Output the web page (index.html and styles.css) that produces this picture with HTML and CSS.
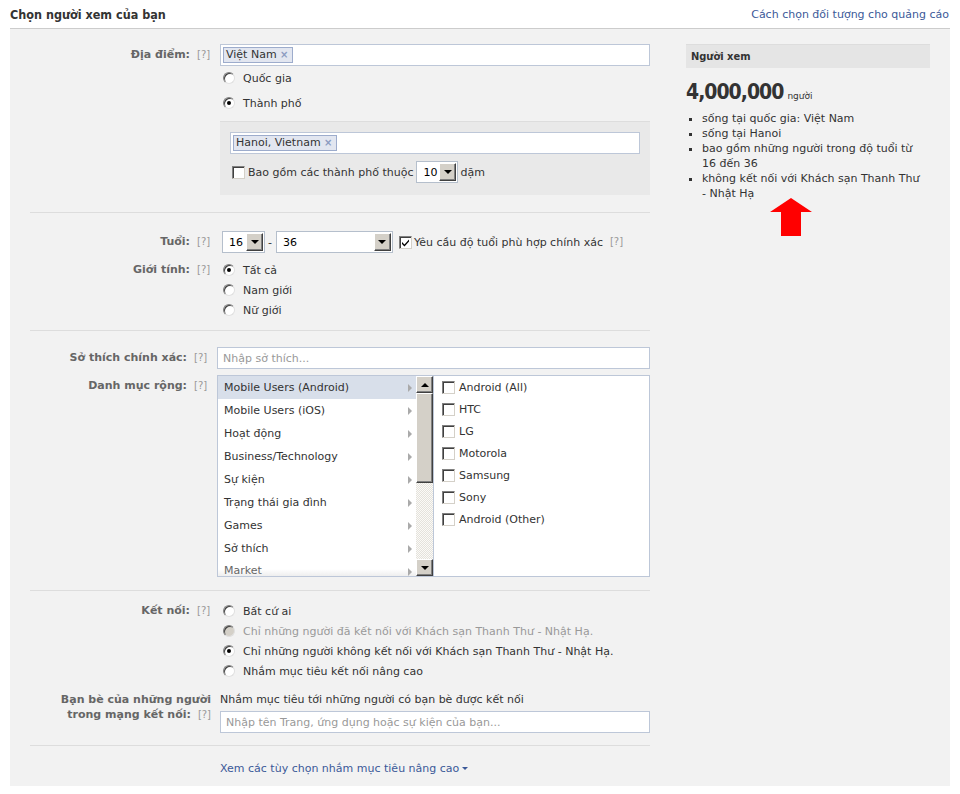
FILE: index.html
```html
<!DOCTYPE html>
<html lang="vi">
<head>
<meta charset="utf-8">
<title>Chọn người xem của bạn</title>
<link rel="stylesheet" href="styles.css">
</head>
<body>
<div class="header">
  <div class="title">Chọn người xem của bạn</div>
  <a class="link" href="#">Cách chọn đối tượng cho quảng cáo</a>
</div>
<div class="panel">
  <div class="form">
    <!-- Location -->
    <div class="section sec-loc">
      <div class="row">
        <div class="label lbl-loc">Địa điểm:</div>
        <div class="help">[?]</div>
        <div class="control">
          <div class="input"><span class="token">Việt Nam <span class="x">×</span></span></div>
          <div class="opt opt-first"><span class="radio"></span>Quốc gia</div>
          <div class="opt opt-second"><span class="radio checked"></span>Thành phố</div>
          <div class="subpanel">
            <div class="input sub-input"><span class="token">Hanoi, Vietnam <span class="x">×</span></span></div>
            <div class="sub-row"><span class="check"></span>Bao gồm các thành phố thuộc <span class="select sel-10"><span class="sel-val">10</span><span class="sel-btn"></span></span> dặm</div>
          </div>
        </div>
      </div>
    </div>
    <div class="divider d1"></div>
    <!-- Age / gender -->
    <div class="section sec-age">
      <div class="row row-age">
        <div class="label">Tuổi:</div>
        <div class="help">[?]</div>
        <div class="control age-ctrl">
          <span class="select sel-16"><span class="sel-val">16</span><span class="sel-btn"></span></span>
          <span class="dash">-</span>
          <span class="select sel-36"><span class="sel-val">36</span><span class="sel-btn"></span></span>
          <span class="check checked"><svg viewBox="0 0 11 11" width="11" height="11"><path d="M2 5 L4.5 7.5 L9 2.5 L9 4.5 L4.5 9.5 L2 7 Z" fill="#000"/></svg></span>
          <span class="age-text">Yêu cầu độ tuổi phù hợp chính xác</span>
          <span class="help inline-help">[?]</span>
        </div>
      </div>
      <div class="row row-gender">
        <div class="label">Giới tính:</div>
        <div class="help">[?]</div>
        <div class="control">
          <div class="opt"><span class="radio checked"></span>Tất cả</div>
          <div class="opt"><span class="radio"></span>Nam giới</div>
          <div class="opt"><span class="radio"></span>Nữ giới</div>
        </div>
      </div>
    </div>
    <div class="divider d2"></div>
    <!-- Interests -->
    <div class="section sec-int">
      <div class="row row-int">
        <div class="label">Sở thích chính xác:</div>
        <div class="help">[?]</div>
        <div class="control wide">
          <div class="input placeholder">Nhập sở thích...</div>
        </div>
      </div>
      <div class="row row-int row-cat">
        <div class="label">Danh mục rộng:</div>
        <div class="help">[?]</div>
        <div class="control wide">
          <div class="catbox">
            <div class="catlist">
              <div class="cat active">Mobile Users (Android)<span class="arr"></span></div>
              <div class="cat">Mobile Users (iOS)<span class="arr"></span></div>
              <div class="cat">Hoạt động<span class="arr"></span></div>
              <div class="cat">Business/Technology<span class="arr"></span></div>
              <div class="cat">Sự kiện<span class="arr"></span></div>
              <div class="cat">Trạng thái gia đình<span class="arr"></span></div>
              <div class="cat">Games<span class="arr"></span></div>
              <div class="cat">Sở thích<span class="arr"></span></div>
              <div class="cat cut">Market<span class="arr"></span></div>
            </div>
            <div class="scrollbar">
              <div class="sb-btn sb-up"><span class="tri-up"></span></div>
              <div class="sb-thumb"></div>
              <div class="sb-track"></div>
              <div class="sb-btn sb-down"><span class="tri-down"></span></div>
            </div>
            <div class="sublist">
              <div class="subitem"><span class="check"></span>Android (All)</div>
              <div class="subitem"><span class="check"></span>HTC</div>
              <div class="subitem"><span class="check"></span>LG</div>
              <div class="subitem"><span class="check"></span>Motorola</div>
              <div class="subitem"><span class="check"></span>Samsung</div>
              <div class="subitem"><span class="check"></span>Sony</div>
              <div class="subitem"><span class="check"></span>Android (Other)</div>
            </div>
          </div>
        </div>
      </div>
    </div>
    <div class="divider d3"></div>
    <!-- Connections -->
    <div class="section sec-conn">
      <div class="row">
        <div class="label">Kết nối:</div>
        <div class="help">[?]</div>
        <div class="control">
          <div class="opt"><span class="radio"></span>Bất cứ ai</div>
          <div class="opt disabled"><span class="radio dis"></span>Chỉ những người đã kết nối với Khách sạn Thanh Thư - Nhật Hạ.</div>
          <div class="opt"><span class="radio checked"></span>Chỉ những người không kết nối với Khách sạn Thanh Thư - Nhật Hạ.</div>
          <div class="opt"><span class="radio"></span>Nhắm mục tiêu kết nối nâng cao</div>
        </div>
      </div>
      <div class="row row-friends">
        <div class="label two-line">Bạn bè của những người<br>trong mạng kết nối:<span class="help inline-q">[?]</span></div>
        <div class="control">
          <div class="friends-text">Nhắm mục tiêu tới những người có bạn bè được kết nối</div>
          <div class="input placeholder">Nhập tên Trang, ứng dụng hoặc sự kiện của bạn...</div>
        </div>
      </div>
    </div>
    <div class="divider d4"></div>
    <div class="more"><a class="link" href="#">Xem các tùy chọn nhắm mục tiêu nâng cao</a><span class="caret"></span></div>
  </div>
  <div class="side">
    <div class="side-head">Người xem</div>
    <div class="count"><span class="num">4,000,000</span><span class="unit">người</span></div>
    <ul class="facts">
      <li>sống tại quốc gia: Việt Nam</li>
      <li>sống tại Hanoi</li>
      <li>bao gồm những người trong độ tuổi từ 16 đến 36</li>
      <li>không kết nối với Khách sạn Thanh Thư - Nhật Hạ</li>
    </ul>
    <div class="arrow-wrap">
      <svg width="44" height="40" viewBox="0 0 44 40"><polygon points="21,0 42,14 31,14 31,38 11,38 11,14 0,14" fill="#ff0000"/></svg>
    </div>
  </div>
</div>
</body>
</html>
```
FILE: styles.css
```css
* { box-sizing: border-box; }
body {
  margin: 0;
  background: #fff;
  font-family: "DejaVu Sans", "Liberation Sans", sans-serif;
  font-size: 11px;
  color: #333;
}
.header {
  margin: 0 10px;
  height: 29px;
  border-bottom: 1px solid #ccc;
  display: flex;
  justify-content: space-between;
  align-items: center;
  padding-top: 1px;
}
.title {
  font-family: "DejaVu Sans Condensed", "DejaVu Sans", sans-serif;
  font-weight: bold;
  font-size: 12.5px;
  color: #333;
}
.link { color: #3b5998; text-decoration: none; font-size: 11px; }
.header .link { margin-right: 1px; }

.panel {
  margin: 0 10px;
  background: #f2f2f2;
  display: flex;
  padding: 15px 0 11px;
  height: 757px;
}
.form { width: 640px; }
.row {
  display: grid;
  grid-template-columns: 180px 30px 430px;
  align-items: start;
}
.row-int { grid-template-columns: 177px 30px 433px; }
.label {
  text-align: right;
  font-weight: bold;
  color: #666;
  line-height: 22px;
  white-space: nowrap;
}
.help {
  color: #999;
  font-size: 10px;
  line-height: 22px;
  padding-left: 7px;
  font-weight: normal;
}
.control { min-width: 0; }

.input {
  height: 22px;
  background: #fff;
  border: 1px solid #bdc7d8;
  display: flex;
  align-items: center;
  padding: 0 2px;
}
.placeholder { color: #999; padding-left: 5px; }
.token {
  background: #e2e6f0;
  border: 1px solid #9daccc;
  height: 16px;
  line-height: 14px;
  padding: 0 3px 0 2px;
  color: #333;
}
.token .x { color: #8a9ac0; font-size: 10px; font-weight: bold; }

.opt {
  height: 20px;
  display: flex;
  align-items: center;
  color: #333;
  white-space: nowrap;
}
.opt-first { margin-top: 2px; }
.opt-second { margin-top: 5px; }
.radio {
  width: 12px;
  height: 12px;
  border-radius: 50%;
  background: #fff;
  border: 1px solid;
  border-color: #808080 #e0e0e0 #e0e0e0 #808080;
  box-shadow: inset 1px 1px 0 #404040;
  margin: 0 8px 0 3px;
  position: relative;
  flex: none;
}
.radio.checked::after {
  content: "";
  position: absolute;
  left: 3px; top: 3px;
  width: 4px; height: 4px;
  border-radius: 50%;
  background: #000;
}
.radio.dis { background: #d4d0c8; }
.opt.disabled { color: #999; }

.subpanel {
  margin-top: 8px;
  background: #e9e9e9;
  border-top: 1px solid #ddd;
  height: 74px;
  padding: 10px 10px 0;
}
.sub-row {
  margin-top: 7px;
  height: 22px;
  display: flex;
  align-items: center;
  white-space: nowrap;
}
.sub-row .check { margin: 0 3px 0 2px; }
.sub-row .select { margin: 0 2px 0 3px; }

.check {
  width: 13px;
  height: 13px;
  background: #fff;
  border: 1px solid;
  border-color: #808080 #d4d0c8 #d4d0c8 #808080;
  box-shadow: inset 1px 1px 0 #404040;
  display: inline-flex;
  align-items: center;
  justify-content: center;
  flex: none;
}
.check svg { display: block; }

.select {
  height: 22px;
  background: #fff;
  border: 1px solid #b5bfcc;
  display: inline-flex;
  align-items: center;
  justify-content: space-between;
  padding: 1px 1px 1px 6px;
  flex: none;
}
.sel-10 { width: 42px; }
.sel-16 { width: 43px; }
.sel-36 { width: 117px; }
.sel-val { color: #000; }
.sel-btn, .sb-btn {
  width: 17px;
  height: 18px;
  background: #d4d0c8;
  border: 1px solid;
  border-color: #fff #404040 #404040 #fff;
  box-shadow: inset -1px -1px 0 #808080;
  position: relative;
  display: flex;
  align-items: center;
  justify-content: center;
}
.sel-btn::after, .tri-down {
  content: "";
  width: 0; height: 0;
  border-left: 4px solid transparent;
  border-right: 4px solid transparent;
  border-top: 4px solid #000;
}
.tri-up {
  width: 0; height: 0;
  border-left: 4px solid transparent;
  border-right: 4px solid transparent;
  border-bottom: 4px solid #000;
}

.sec-age { padding-top: 18px; }
.age-ctrl {
  display: flex;
  align-items: center;
  height: 22px;
  white-space: nowrap;
}
.sel-16 { margin-left: 2px; }
.dash { margin: 0 4px 0 3px; color: #333; }
.age-ctrl .check { margin-left: 6px; }
.age-text { margin-left: 2px; }
.inline-help { padding-left: 7px; }
.row-gender { margin-top: 7px; }
.row-gender .label, .row-gender .help { line-height: 20px; }

.divider {
  height: 1px;
  background: #ddd;
  margin-left: 20px;
  width: 620px;
}
.d1 { margin-top: 17px; }
.d2 { margin-top: 10px; }
.d3 { margin-top: 13px; }
.d4 { margin-top: 12px; }

.sec-int { padding-top: 16px; }
.row-cat { margin-top: 6px; }
.catbox {
  height: 202px;
  border: 1px solid #bdc7d8;
  background: #fff;
  display: flex;
}
.catlist {
  width: 198px;
  overflow: hidden;
  position: relative;
}
.cat {
  height: 23px;
  line-height: 23px;
  padding-left: 6px;
  position: relative;
  color: #333;
}
.cat.active { background: #d8dfea; }
.cat.cut {
  color: #666;
  line-height: 21px;
  background: linear-gradient(#fff 40%, #ddd);
}
.arr {
  position: absolute;
  right: 4px;
  top: 8px;
  width: 0; height: 0;
  border-top: 4px solid transparent;
  border-bottom: 4px solid transparent;
  border-left: 4px solid #aaa;
}
.scrollbar {
  width: 17px;
  display: flex;
  flex-direction: column;
  background-color: #f4f3ef;
  background-image: repeating-conic-gradient(#e4e2dc 0 25%, #fbfaf7 0 50%);
  background-size: 2px 2px;
}
.sb-btn { height: 17px; flex: none; }
.sb-thumb {
  height: 90px;
  background: #d4d0c8;
  border: 1px solid;
  border-color: #fff #404040 #404040 #fff;
  box-shadow: inset -1px -1px 0 #808080;
}
.sb-track { flex: 1; }
.sublist { flex: 1; border-left: 1px solid #bdc7d8; }
.subitem {
  height: 22px;
  display: flex;
  align-items: center;
  color: #333;
}
.subitem .check { margin: 0 4px 0 8px; }

.sec-conn { padding-top: 10px; }
.sec-conn .label, .sec-conn .help { line-height: 20px; }
.row-friends { margin-top: 11px; }
.row-friends .label.two-line {
  grid-column: 1 / 3;
  line-height: 15px;
  padding-right: 9px;
}
.row-friends .label .inline-q {
  line-height: 15px;
  padding-left: 7px;
}
.friends-text { line-height: 15px; color: #333; white-space: nowrap; }
.row-friends .input { margin-top: 4px; }

.more {
  padding: 16px 0 0 210px;
  line-height: 14px;
}
.caret {
  display: inline-block;
  margin-left: 3px;
  vertical-align: 2px;
  border-left: 3px solid transparent;
  border-right: 3px solid transparent;
  border-top: 3px solid #3b5998;
}

.side {
  margin-left: 36px;
  width: 244px;
}
.side-head {
  background: #e5e5e5;
  border-top: 1px solid #ddd;
  height: 24px;
  line-height: 23px;
  padding-left: 5px;
  font-weight: bold;
  color: #333;
  font-family: "DejaVu Sans Condensed", "DejaVu Sans", sans-serif;
}
.count {
  margin-top: 12px;
  height: 28px;
  display: flex;
  align-items: baseline;
}
.num {
  font-family: "DejaVu Sans Condensed", "DejaVu Sans", sans-serif;
  font-weight: bold;
  font-size: 21px;
  color: #333;
  letter-spacing: -1px;
}
.unit { font-size: 9px; margin-left: 4px; }
.facts {
  margin: 3px 5px 0 0;
  padding: 0 0 0 16px;
  list-style: square;
  line-height: 15px;
  color: #333;
}
.arrow-wrap {
  margin-top: -3px;
  padding-left: 84px;
}
.arrow-wrap svg { display: block; }
```
